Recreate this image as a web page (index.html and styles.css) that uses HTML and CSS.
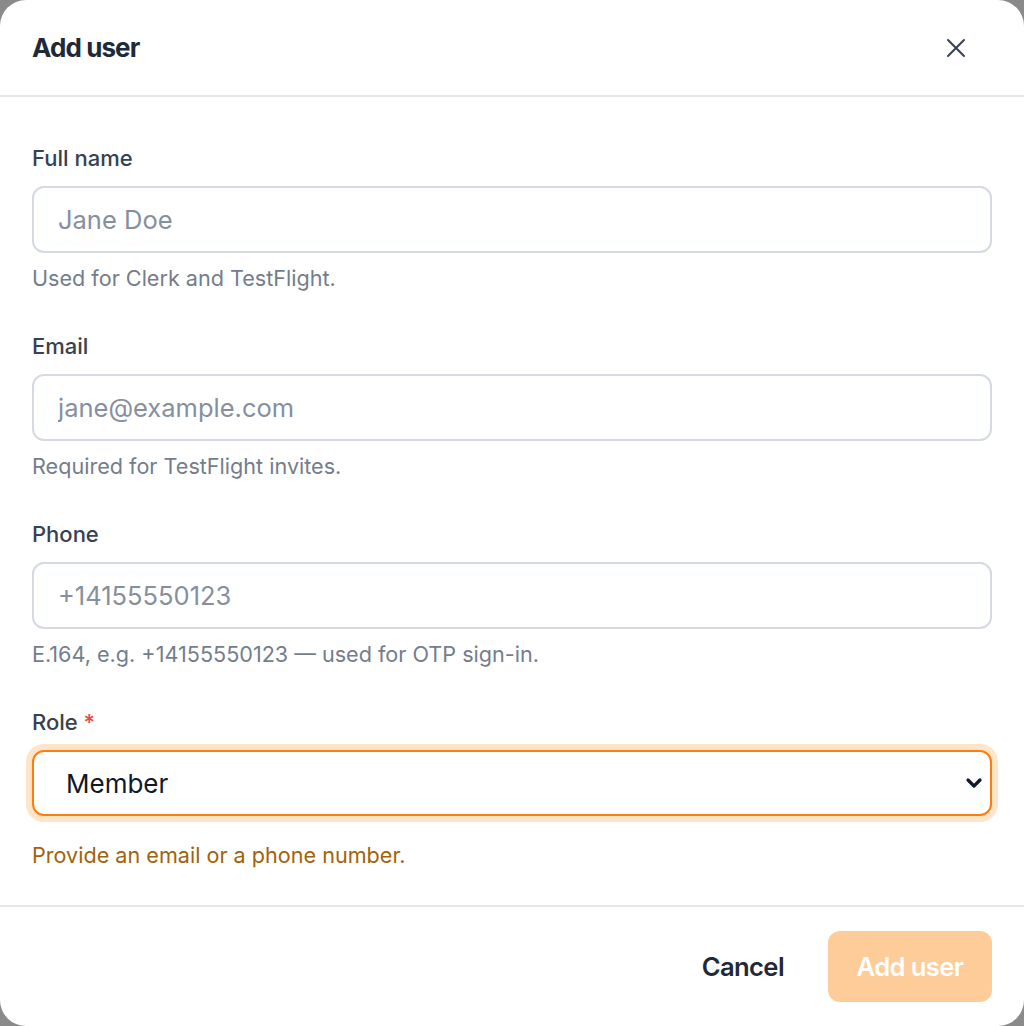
FILE: index.html
```html
<!DOCTYPE html>
<html lang="en">
<head>
    <meta charset="UTF-8">
    <meta name="viewport" content="width=device-width, initial-scale=1.0">
    <title>Add user</title>
    <link rel="stylesheet" href="styles.css">
</head>
<body>
    <div class="dialog">
        <div class="dialog-header">
            <h2>Add user</h2>
            <button class="close-btn" aria-label="Close">
                <svg width="20" height="20" viewBox="0 0 20 20" fill="none" stroke="currentColor" stroke-width="2" stroke-linecap="round">
                    <path d="M2 2 L18 18 M18 2 L2 18"/>
                </svg>
            </button>
        </div>

        <form class="dialog-body">
            <div class="field">
                <label for="name">Full name</label>
                <input id="name" type="text" placeholder="Jane Doe">
                <p class="hint">Used for Clerk and TestFlight.</p>
            </div>
            <div class="field">
                <label for="email">Email</label>
                <input id="email" type="email" placeholder="jane@example.com">
                <p class="hint">Required for TestFlight invites.</p>
            </div>
            <div class="field">
                <label for="phone">Phone</label>
                <input id="phone" type="tel" placeholder="+14155550123">
                <p class="hint">E.164, e.g. +14155550123 — used for OTP sign-in.</p>
            </div>
            <div class="field">
                <label for="role">Role <span class="req">*</span></label>
                <div class="select-wrap">
                    <select id="role">
                        <option>Member</option>
                        <option>Admin</option>
                    </select>
                    <svg class="chevron" width="18" height="12" viewBox="0 0 18 12" fill="none" stroke="currentColor" stroke-width="3.2" stroke-linecap="round" stroke-linejoin="round">
                        <path d="M3 3 L9 9 L15 3"/>
                    </svg>
                </div>
            </div>
            <p class="warning">Provide an email or a phone number.</p>
        </form>

        <div class="dialog-footer">
            <button class="btn-cancel">Cancel</button>
            <button class="btn-primary" disabled>Add user</button>
        </div>
    </div>
</body>
</html>
```

FILE: styles.css
```css
* {
    box-sizing: border-box;
}

body {
    margin: 0;
    background: #8a8a8a;
    font-family: Inter, "Noto Sans", sans-serif;
}

.dialog {
    width: 1024px;
    height: 1026px;
    background: #fff;
    border-radius: 26px;
    display: flex;
    flex-direction: column;
    overflow: hidden;
}

.dialog-header {
    height: 97px;
    flex-shrink: 0;
    display: flex;
    align-items: center;
    justify-content: space-between;
    padding: 0 32px;
    border-bottom: 2px solid #e5e7eb;
}

.dialog-header h2 {
    margin: 0;
    font-size: 26px;
    font-weight: 700;
    letter-spacing: -0.9px;
    color: #1f2937;
}

.close-btn {
    border: none;
    background: none;
    padding: 0;
    margin-right: 26px;
    width: 20px;
    height: 20px;
    color: #374151;
    display: flex;
}

.dialog-body {
    flex: 1;
    padding: 46px 32px 0;
    margin: 0;
}

.field {
    margin-bottom: 38px;
}

.field label {
    display: block;
    font-size: 22px;
    line-height: 30px;
    font-weight: 500;
    color: #374151;
    margin-bottom: 13px;
}

.req {
    color: #ef4444;
}

.field input {
    display: block;
    width: 100%;
    height: 67px;
    border: 2px solid #d5d9e2;
    border-radius: 12px;
    padding: 0 24px;
    font-family: inherit;
    font-size: 25.5px;
    color: #111827;
    outline: none;
}

.field input::placeholder {
    color: #868f9e;
}

.hint {
    margin: 10px 0 0;
    font-size: 21.6px;
    line-height: 30px;
    color: #737d8c;
}

.select-wrap {
    position: relative;
}

.select-wrap select {
    display: block;
    width: 100%;
    height: 66px;
    appearance: none;
    -webkit-appearance: none;
    background: #fff;
    border: 2px solid #fb7e10;
    border-radius: 12px;
    box-shadow: 0 0 0 6px #ffe4c8;
    padding: 0 32px;
    font-family: inherit;
    font-size: 26px;
    color: #111827;
    outline: none;
}

.chevron {
    position: absolute;
    right: 9px;
    top: 27px;
    color: #111827;
    pointer-events: none;
}

.warning {
    margin: -14px 0 0;
    font-size: 21.6px;
    line-height: 30px;
    color: #a3620a;
}

.dialog-footer {
    flex-shrink: 0;
    border-top: 2px solid #e5e7eb;
    padding: 24px 32px 24px;
    display: flex;
    justify-content: flex-end;
    align-items: center;
    gap: 44px;
}

.dialog-footer button {
    font-family: inherit;
    font-size: 25.6px;
    font-weight: 600;
    letter-spacing: -0.6px;
    border: none;
}

.btn-cancel {
    background: none;
    color: #1f2937;
    padding: 0;
}

.btn-primary {
    height: 71px;
    width: 164px;
    border-radius: 12px;
    background: #fecc99;
    color: #fff;
}
```
